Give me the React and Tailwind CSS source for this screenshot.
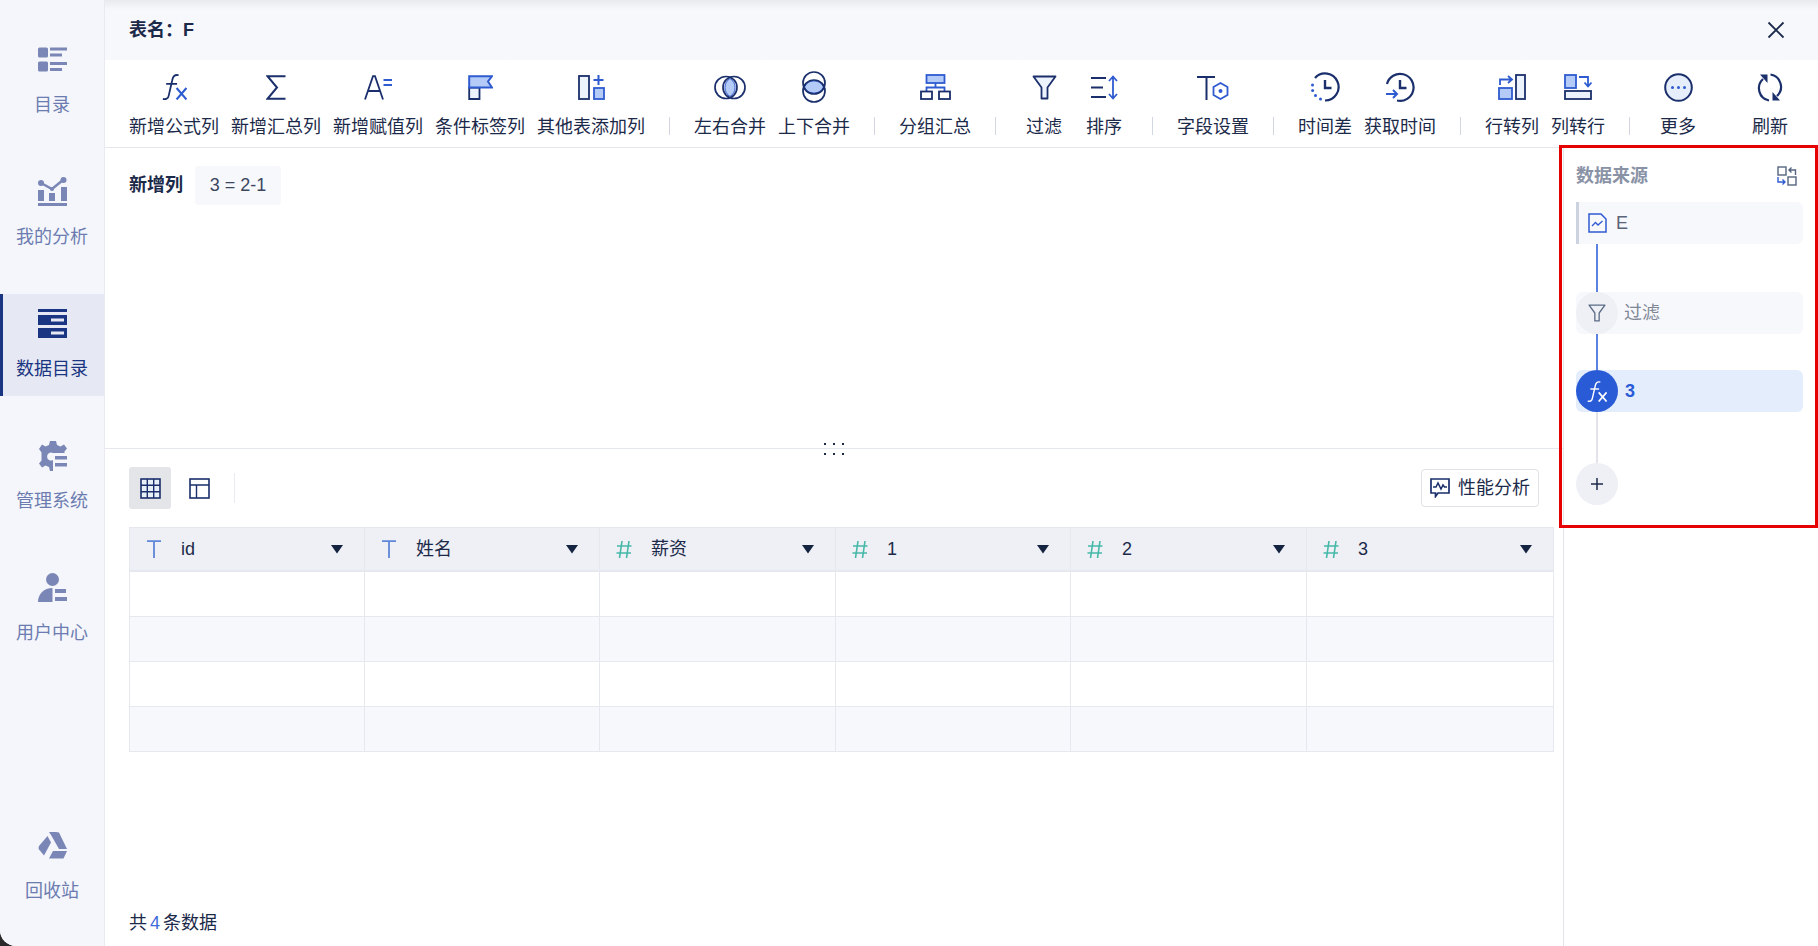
import React from "react";

const NAVY = "#1a2f6b";
const BLUE = "#2f5bd0";
const LIGHT = "#b4cbf7";
const PALE = "#edf3fd";

const Ico = ({ w, h, children, className = "" }) => (
  <svg width={w} height={h} viewBox={`0 0 ${w} ${h}`} fill="none" className={className}>
    {children}
  </svg>
);

const FxIcon = ({ a = NAVY, b = BLUE, w = 25, h = 26 }) => (
  <svg width={w} height={h} viewBox="0 0 24 25" fill="none">
    <path d="M16 1.2C12 .2 10.4 2.5 9.8 6L6.5 20.5C6 23.5 4 24.8 .8 24" stroke={a} strokeWidth="1.7" />
    <path d="M4 9.5H14.5" stroke={a} strokeWidth="1.7" />
    <path d="M14 13.5L23.5 24.5M23.5 13.5L14 24.5" stroke={b} strokeWidth="2" />
  </svg>
);

const Funnel = ({ w = 25, h = 25, stroke = NAVY, fill = PALE }) => (
  <svg width={w} height={h} viewBox="0 0 25 25" fill="none">
    <path d="M1.5 1.5H23.5L15.5 12.5V23.5H9.5V12.5Z" fill={fill} stroke={stroke} strokeWidth="1.8" strokeLinejoin="round" />
  </svg>
);

const tools = {
  fx: <FxIcon />,
  sum: (
    <Ico w={20} h={25}>
      <path d="M19.5 1.2H1.5L11 12.5L1.5 23.8H19.5" stroke={NAVY} strokeWidth="2" />
    </Ico>
  ),
  assign: (
    <Ico w={28} h={25}>
      <path d="M1 24.5L9 1.2H11L19 24.5M4.2 16H15.8" stroke={NAVY} strokeWidth="1.8" />
      <path d="M19.5 5H28M19.5 10H28" stroke={BLUE} strokeWidth="2" />
    </Ico>
  ),
  flag: (
    <Ico w={25} h={25}>
      <path d="M1.2 12.5H11.5V24H1.2Z" fill={PALE} stroke={NAVY} strokeWidth="1.8" />
      <path d="M1.2 1.2H24L20 6.5L24 12.5H1.2Z" fill={LIGHT} stroke={BLUE} strokeWidth="2" />
    </Ico>
  ),
  addOther: (
    <Ico w={27} h={25}>
      <rect x="1" y="1" width="10" height="23" fill={PALE} stroke={NAVY} strokeWidth="1.8" />
      <path d="M20.5 0V10M15.5 5H25.5" stroke={BLUE} strokeWidth="2" />
      <rect x="16" y="13" width="10" height="11" fill={LIGHT} stroke={BLUE} strokeWidth="1.8" />
    </Ico>
  ),
  lr: (
    <Ico w={32} h={25}>
      <path d="M16 3.5a10.5 10.5 0 0 1 0 18a10.5 10.5 0 0 1 0-18Z" fill={LIGHT} stroke={BLUE} strokeWidth="1" />
      <circle cx="12" cy="12.5" r="11" stroke={NAVY} strokeWidth="1.7" />
      <circle cx="20" cy="12.5" r="11" stroke={NAVY} strokeWidth="1.7" />
    </Ico>
  ),
  ud: (
    <Ico w={26} h={32}>
      <path d="M3.5 16a10.5 10.5 0 0 1 19 0a10.5 10.5 0 0 1-19 0Z" fill={LIGHT} stroke={BLUE} strokeWidth="1" />
      <circle cx="13" cy="12" r="11" stroke={NAVY} strokeWidth="1.7" />
      <circle cx="13" cy="20" r="11" stroke={NAVY} strokeWidth="1.7" />
    </Ico>
  ),
  group: (
    <Ico w={31} h={26}>
      <rect x="6.5" y="1" width="18" height="8" fill={LIGHT} stroke={BLUE} strokeWidth="1.8" />
      <path d="M15.5 9V13.5M6.5 17V13.5H24.5V17" stroke={BLUE} strokeWidth="1.8" />
      <rect x="1" y="17.5" width="11" height="7.5" stroke={NAVY} strokeWidth="1.8" />
      <rect x="19" y="17.5" width="11" height="7.5" stroke={NAVY} strokeWidth="1.8" />
    </Ico>
  ),
  filter: <Funnel />,
  sort: (
    <Ico w={28} h={25}>
      <path d="M1 3H16M1 12.5H13M1 22H16" stroke={NAVY} strokeWidth="2" />
      <path d="M23 1.5V23.5M19 6L23 1.5L27 6M19 19L23 23.5L27 19" stroke={BLUE} strokeWidth="1.8" />
    </Ico>
  ),
  field: (
    <Ico w={32} h={25}>
      <path d="M0 2H18M9.5 2V25" stroke={NAVY} strokeWidth="2" />
      <path d="M23.5 8L30.5 12V20L23.5 24L16.5 20V12Z" stroke={BLUE} strokeWidth="1.8" fill="#fff" />
      <circle cx="23.5" cy="16" r="2" fill={BLUE} />
    </Ico>
  ),
  diff: (
    <Ico w={30} h={30}>
      <path d="M5 6A13.5 13.5 0 1 1 15 28.5" stroke={NAVY} strokeWidth="2.2" />
      <path d="M15 8V16H21.5" stroke={NAVY} strokeWidth="2.4" />
      <circle cx="2.5" cy="13" r="1.5" fill={BLUE} />
      <circle cx="2.6" cy="18.5" r="1.5" fill={BLUE} />
      <circle cx="5.5" cy="23.5" r="1.5" fill={BLUE} />
      <circle cx="10.5" cy="27" r="1.5" fill={BLUE} />
    </Ico>
  ),
  gettime: (
    <Ico w={30} h={30}>
      <path d="M2 12A13.5 13.5 0 1 1 12 28.5" stroke={NAVY} strokeWidth="2.2" />
      <path d="M15 8V16H21.5" stroke={NAVY} strokeWidth="2.4" />
      <path d="M1 22H12M8 18L12 22L8 26" stroke={BLUE} strokeWidth="2" />
    </Ico>
  ),
  r2c: (
    <Ico w={28} h={26}>
      <rect x="18" y="1" width="9" height="24" fill={PALE} stroke={NAVY} strokeWidth="1.8" />
      <rect x="1" y="14" width="13" height="11" fill={LIGHT} stroke={BLUE} strokeWidth="1.8" />
      <path d="M2 11V5.5H14M10 2L14 5.5L10 9" stroke={BLUE} strokeWidth="1.8" />
    </Ico>
  ),
  c2r: (
    <Ico w={28} h={26}>
      <rect x="1" y="1" width="11" height="13" fill={LIGHT} stroke={BLUE} strokeWidth="1.8" />
      <rect x="1" y="17" width="26" height="8" fill={PALE} stroke={NAVY} strokeWidth="1.8" />
      <path d="M15 3H24V12M20.5 8.5L24 12.5L27.5 8.5" stroke={BLUE} strokeWidth="1.8" />
    </Ico>
  ),
  more: (
    <Ico w={29} h={29}>
      <circle cx="14.5" cy="14.5" r="13.3" fill="#e6eefc" stroke={NAVY} strokeWidth="2" />
      <circle cx="8.5" cy="14.5" r="1.5" fill={BLUE} />
      <circle cx="14.5" cy="14.5" r="1.5" fill={BLUE} />
      <circle cx="20.5" cy="14.5" r="1.5" fill={BLUE} />
    </Ico>
  ),
  refresh: (
    <Ico w={28} h={29}>
      <path d="M7 6A12.5 12.5 0 0 0 13 27.5" stroke={NAVY} strokeWidth="2.2" />
      <path d="M14.5 1.5A12.5 12.5 0 0 1 21 23" stroke={NAVY} strokeWidth="2.2" />
      <path d="M4 1.5H11.5V10Z" fill={NAVY} />
      <path d="M24 27.5H16.5V19Z" fill={NAVY} />
    </Ico>
  ),
};

const toolbar = [
  { key: "fx", label: "新增公式列" },
  { key: "sum", label: "新增汇总列" },
  { key: "assign", label: "新增赋值列" },
  { key: "flag", label: "条件标签列" },
  { key: "addOther", label: "其他表添加列" },
  "sep",
  { key: "lr", label: "左右合并" },
  { key: "ud", label: "上下合并" },
  "sep",
  { key: "group", label: "分组汇总" },
  "sep",
  { key: "filter", label: "过滤" },
  { key: "sort", label: "排序" },
  "sep",
  { key: "field", label: "字段设置" },
  "sep",
  { key: "diff", label: "时间差" },
  { key: "gettime", label: "获取时间" },
  "sep",
  { key: "r2c", label: "行转列" },
  { key: "c2r", label: "列转行" },
  "sep",
  { key: "more", label: "更多" },
  { key: "refresh", label: "刷新", push: true },
];

const sideIcon = {
  catalog: (c) => (
    <Ico w={29} h={25}>
      <rect y="0.5" width="10" height="10" rx="1.5" fill={c} />
      <rect y="14.5" width="10" height="10" rx="1.5" fill={c} />
      <rect x="12" y="0.5" width="17" height="3" fill={c} />
      <rect x="12" y="6.5" width="12" height="3" fill={c} />
      <rect x="12" y="15" width="17" height="3" fill={c} />
      <rect x="12" y="21" width="12" height="3" fill={c} />
    </Ico>
  ),
  analysis: (c) => (
    <Ico w={29} h={29}>
      <path d="M3 6L14 12L25 3" stroke={c} strokeWidth="2.5" />
      <circle cx="3" cy="6" r="3" fill={c} />
      <circle cx="25.5" cy="3" r="3" fill={c} />
      <circle cx="14" cy="12" r="2" fill={c} />
      <rect y="13" width="6" height="11" fill={c} />
      <rect x="11" y="16" width="6" height="8" fill={c} />
      <rect x="23" y="10" width="6" height="14" fill={c} />
      <rect y="26" width="29" height="3" fill={c} />
    </Ico>
  ),
  data: (c) => (
    <Ico w={29} h={29}>
      <rect width="29" height="3" fill={c} />
      <rect y="6" width="29" height="10" fill={c} />
      <rect y="19" width="29" height="10" fill={c} />
      <rect x="13" y="9.5" width="13" height="3" fill="#e6e9f3" />
      <rect x="13" y="22.5" width="13" height="3" fill="#e6e9f3" />
    </Ico>
  ),
  manage: (c) => (
    <Ico w={29} h={30}>
      <path d="M12 0H18L19 4L22.5 5.5L26 3.5L29 7.5L26.5 10.5V12H15A4 4 0 1 0 15 19V30H12L11 26L7.5 24.5L4 26.5L1 22.5L3.5 19.5V11.5L1 8L4 3.5L7.5 5.5L11 4Z" fill={c} />
      <rect x="17" y="15" width="12" height="3.5" fill={c} />
      <rect x="17" y="22" width="12" height="3.5" fill={c} />
    </Ico>
  ),
  user: (c) => (
    <Ico w={29} h={29}>
      <circle cx="14.5" cy="6.5" r="6.5" fill={c} />
      <path d="M0 29C0 21 6 15 14.5 15V29Z" fill={c} />
      <rect x="17" y="16" width="11" height="4" fill={c} />
      <rect x="17" y="24" width="12" height="4" fill={c} />
    </Ico>
  ),
  trash: (c) => (
    <Ico w={29} h={27}>
      <path d="M11 0H18L21 0.5L29 17H21L13 3Z" fill={c} />
      <path d="M9.5 4L13 10.5L6 23.5L1 17.5Q0 16 1 14Z" fill={c} />
      <path d="M11 26.5L15 19H29L25.5 26.5Z" fill={c} />
    </Ico>
  ),
};

const sideItems = [
  { key: "catalog", label: "目录" },
  { key: "analysis", label: "我的分析" },
  { key: "data", label: "数据目录", active: true },
  { key: "manage", label: "管理系统" },
  { key: "user", label: "用户中心" },
];

const SideItem = ({ item }) => {
  const color = item.active ? "#1a3582" : "#7a87b6";
  return (
    <div
      className={`relative flex h-[102px] flex-col items-center pt-[15px] ${
        item.active ? "bg-[#e6e9f3] text-[#1a3582]" : "text-[#6c7cb0]"
      }`}
    >
      {item.active && <div className="absolute bottom-0 left-0 top-0 w-[3px] bg-[#1a3582]" />}
      <div className="flex h-[29px] items-center justify-center">{sideIcon[item.key](color)}</div>
      <div className="mt-[19px] text-[18px] leading-[24px]">{item.label}</div>
    </div>
  );
};

const columns = [
  { type: "T", name: "id" },
  { type: "T", name: "姓名" },
  { type: "#", name: "薪资" },
  { type: "#", name: "1" },
  { type: "#", name: "2" },
  { type: "#", name: "3" },
];

const TypeIcon = ({ type }) =>
  type === "T" ? (
    <Ico w={16} h={18}>
      <path d="M1 1.2H15M8 1.2V18" stroke="#5f86d8" strokeWidth="1.8" />
    </Ico>
  ) : (
    <Ico w={16} h={18}>
      <path d="M6 1L3.5 18M13 1L10.5 18M1 6H15.5M0.5 13H15" stroke="#45b8a8" strokeWidth="1.6" />
    </Ico>
  );

const gridCols = "grid grid-cols-[235px_235px_236px_235px_236px_1fr]";

export default function App() {
  return (
    <div
      className="h-[946px] w-[1818px] overflow-hidden bg-[#2a2a2a] text-[#1c2a4a]"
      style={{ fontFamily: '"Liberation Sans", "Noto Sans CJK SC", sans-serif' }}
    >
      <div className="relative flex h-full w-full overflow-hidden rounded-bl-[16px] bg-white">
        {/* left nav */}
        <aside className="flex h-full w-[105px] shrink-0 flex-col border-r border-[#e8eaf1] bg-[#f4f6fb] pt-[30px]">
          <div className="flex flex-col gap-[30px]">
            {sideItems.map((item) => (
              <SideItem key={item.key} item={item} />
            ))}
          </div>
          <div className="mt-auto pb-[28px]">
            <SideItem item={{ key: "trash", label: "回收站" }} />
          </div>
        </aside>

        <div className="flex h-full min-w-0 flex-1 flex-col">
          {/* title */}
          <div className="flex h-[60px] shrink-0 items-center justify-between bg-[#f7f8fc] bg-gradient-to-b from-[#e9eaee] from-0% to-[#f7f8fc] to-[16%] pl-[24px] pr-[33px]">
            <div className="text-[18px] font-bold">表名：F</div>
            <Ico w={18} h={18}>
              <path d="M1.5 1.5L16.5 16.5M16.5 1.5L1.5 16.5" stroke="#1c2a4a" strokeWidth="1.8" />
            </Ico>
          </div>

          {/* toolbar */}
          <div className="flex h-[88px] shrink-0 items-start gap-[12px] border-b border-[#e6e7ec] pl-[24px] pt-[12px]">
            {toolbar.map((t, i) =>
              t === "sep" ? (
                <div key={i} className="mx-[12px] mt-[45px] h-[18px] w-px shrink-0 bg-[#d3d7e2]" />
              ) : (
                <div
                  key={t.key}
                  className={`flex min-w-[48px] shrink-0 flex-col items-center ${t.push ? "ml-[32px]" : ""}`}
                >
                  <div className="flex h-[30px] items-center justify-center">{tools[t.key]}</div>
                  <div className="mt-[13px] whitespace-nowrap text-[18px] leading-[24px]">{t.label}</div>
                </div>
              )
            )}
          </div>

          <div className="flex min-h-0 flex-1">
            {/* main area */}
            <main className="flex min-w-0 flex-1 flex-col">
              <div className="relative h-[301px] shrink-0 border-b border-[#e6e8ef] pl-[24px] pt-[18px]">
                <div className="flex items-center gap-[12px]">
                  <span className="text-[18px] font-bold">新增列</span>
                  <span className="flex h-[39px] w-[86px] items-center justify-center rounded-[4px] bg-[#f7f8fc] text-[18px] text-[#3a465f]">
                    3 = 2-1
                  </span>
                </div>
                <div className="absolute bottom-[-7px] left-[719px] grid grid-cols-3 gap-x-[7px] gap-y-[8px]">
                  {[0, 1, 2, 3, 4, 5].map((n) => (
                    <span key={n} className="h-[2px] w-[2px] bg-[#1c2a4a]" />
                  ))}
                </div>
              </div>

              <div className="flex flex-1 flex-col pb-[11px] pl-[24px] pr-[9px] pt-[18px]">
                <div className="flex h-[42px] items-center pr-[15px]">
                  <div className="flex h-[42px] w-[42px] items-center justify-center rounded-[3px] bg-[#e4e5e9]">
                    <Ico w={21} h={21}>
                      <rect x="1" y="1" width="19" height="19" fill="#e8f0f8" stroke={NAVY} strokeWidth="1.6" />
                      <path d="M7.3 1V20M13.7 1V20M1 7.3H20M1 13.7H20" stroke={NAVY} strokeWidth="1.4" />
                    </Ico>
                  </div>
                  <div className="ml-[18px]">
                    <Ico w={21} h={21}>
                      <rect x="1" y="1" width="19" height="19" stroke={NAVY} strokeWidth="1.6" />
                      <path d="M1 7H20M7.5 7V20" stroke={NAVY} strokeWidth="1.4" />
                    </Ico>
                  </div>
                  <div className="ml-[24px] h-[30px] w-px bg-[#e9ebf1]" />
                  <button className="ml-auto flex h-[38px] w-[118px] items-center justify-center gap-[8px] rounded-[4px] border border-[#dfe1e8] bg-white text-[18px]">
                    <Ico w={20} h={20}>
                      <path d="M1 1H19V15H8L5.5 18.5V15H1Z" stroke={NAVY} strokeWidth="1.7" />
                      <path d="M3 9H6L8 5L11 11L13 7L14.5 9H17" stroke={NAVY} strokeWidth="1.5" />
                    </Ico>
                    性能分析
                  </button>
                </div>

                <div className="mt-[18px] border border-b-0 border-[#e6e8ef]">
                  <div className={`${gridCols} h-[44px] border-b-2 border-[#e6e8ef] bg-[#eef0f5]`}>
                    {columns.map((c, i) => (
                      <div
                        key={i}
                        className={`flex items-center pl-[16px] pr-[20px] ${i < 5 ? "border-r border-[#e6e8ef]" : ""}`}
                      >
                        <TypeIcon type={c.type} />
                        <span className="ml-[19px] text-[18px]">{c.name}</span>
                        <Ico w={14} h={10} className="ml-auto">
                          <path d="M1 1H13L7 9.5Z" fill="#14233f" />
                        </Ico>
                      </div>
                    ))}
                  </div>
                  {[0, 1, 2, 3].map((r) => (
                    <div
                      key={r}
                      className={`${gridCols} h-[45px] border-b border-[#e6e8ef] ${r % 2 ? "bg-[#f7f8fc]" : "bg-white"}`}
                    >
                      {columns.map((c, i) => (
                        <div key={i} className={i < 5 ? "border-r border-[#e6e8ef]" : ""} />
                      ))}
                    </div>
                  ))}
                </div>

                <div className="mt-auto text-[18px] leading-[24px]">
                  共<span className="mx-[3px] text-[#3f6bdc]">4</span>条数据
                </div>
              </div>
            </main>

            {/* source flow */}
            <aside className="w-[255px] shrink-0 border-l border-[#e2e4ea] pl-[12px] pr-[15px] pt-[15px]">
              <div className="flex h-[26px] items-center justify-between pr-[6px]">
                <span className="text-[18px] font-bold text-[#8a93a6]">数据来源</span>
                <Ico w={20} h={20}>
                  <rect x="1" y="1" width="8" height="8" stroke="#56647f" strokeWidth="1.4" />
                  <rect x="11" y="11" width="8" height="8" stroke="#56647f" strokeWidth="1.4" />
                  <path d="M12 4H18.5V9M14.5 1.5L12 4L14.5 6.5" stroke="#56647f" strokeWidth="1.4" />
                  <path d="M1 11V16H8M5.5 13.5L8 16L5.5 18.5" stroke="#2f5bd0" strokeWidth="1.4" />
                </Ico>
              </div>
              <div className="mt-[13px] flex h-[42px] items-center rounded-r-[6px] border-l-[3px] border-[#cdd3de] bg-[#f7f8fc] pl-[9px]">
                <Ico w={19} h={20}>
                  <path d="M1 1H13L18 6V19H1Z" stroke={BLUE} strokeWidth="1.5" />
                  <path d="M4 13L7.5 9.5L10 12L14.5 8" stroke={BLUE} strokeWidth="1.3" />
                </Ico>
                <span className="ml-[9px] text-[18px] text-[#5a6478]">E</span>
              </div>
              <div className="ml-[20px] h-[48px] w-[2px] bg-[#5b82e0]" />
              <div className="relative flex h-[42px] items-center rounded-[6px] bg-[#f7f8fc] pl-[48px]">
                <div className="absolute left-0 top-0 flex h-[42px] w-[42px] items-center justify-center rounded-full bg-[#eef0f5]">
                  <Funnel w={18} h={18} stroke="#5a6a86" fill="#eef0f5" />
                </div>
                <span className="text-[18px] text-[#7f8797]">过滤</span>
              </div>
              <div className="ml-[20px] h-[36px] w-[2px] bg-[#5b82e0]" />
              <div className="relative flex h-[42px] items-center rounded-[6px] bg-[#e4edfc] pl-[49px]">
                <div className="absolute left-0 top-0 flex h-[42px] w-[42px] items-center justify-center rounded-full bg-[#2a5bd7]">
                  <FxIcon a="#fff" b="#fff" w={20} h={21} />
                </div>
                <span className="text-[18px] font-bold text-[#2a5bd7]">3</span>
              </div>
              <div className="ml-[20px] h-[51px] w-[2px] bg-[#e2e4ea]" />
              <div className="flex h-[42px] w-[42px] items-center justify-center rounded-full bg-[#eef0f5]">
                <Ico w={12} h={12}>
                  <path d="M6 0V12M0 6H12" stroke="#1c2a4a" strokeWidth="1.5" />
                </Ico>
              </div>
            </aside>
          </div>
        </div>

        {/* red highlight drawn over the panel */}
        <div className="pointer-events-none absolute right-0 top-[145px] h-[383px] w-[259px] border-[3px] border-[#e60000]" />
      </div>
    </div>
  );
}
